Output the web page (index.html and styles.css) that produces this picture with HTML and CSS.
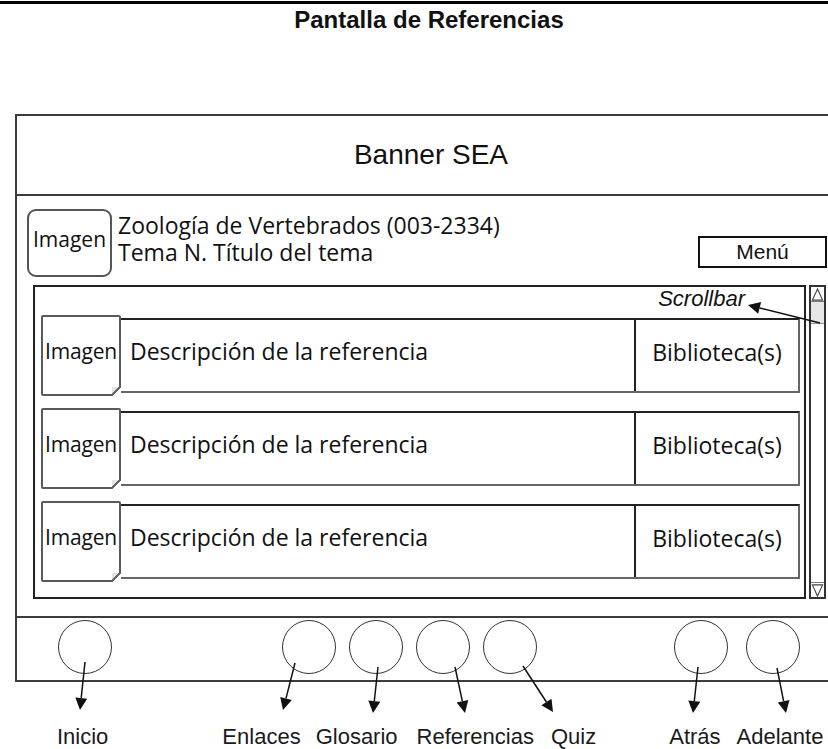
FILE: index.html
```html
<!doctype html>
<html lang="es">
 <head>
  <meta charset="UTF-8">
  <title>Pantalla de Referencias</title>
  <link rel="stylesheet" href="styles.css">
 </head>
 <body>
  <div class="page">
   <div class="topline"></div>
   <h1 class="title">Pantalla de Referencias</h1>

   <div class="frame">
    <div class="banner">Banner SEA</div>

    <!-- cabecera del curso -->
    <div class="course">
     <div class="course-img">Imagen</div>
     <div class="course-text">
      <p>Zoología de Vertebrados (003-2334)</p>
      <p>Tema N. Título del tema</p>
     </div>
     <div class="menu">Menú</div>
    </div>

    <!-- lista de referencias + scrollbar -->
    <div class="content">
     <div class="panel">
      <div class="scroll-note">Scrollbar</div>
      <div class="ref">
       <div class="ref-img">Imagen</div>
       <div class="ref-body">
        <div class="ref-desc">Descripción de la referencia</div>
        <div class="ref-lib">Biblioteca(s)</div>
       </div>
      </div>
      <div class="ref">
       <div class="ref-img">Imagen</div>
       <div class="ref-body">
        <div class="ref-desc">Descripción de la referencia</div>
        <div class="ref-lib">Biblioteca(s)</div>
       </div>
      </div>
      <div class="ref">
       <div class="ref-img">Imagen</div>
       <div class="ref-body">
        <div class="ref-desc">Descripción de la referencia</div>
        <div class="ref-lib">Biblioteca(s)</div>
       </div>
      </div>
     </div>
     <div class="scrollbar">
      <div class="sb-btn sb-up">
       <svg width="14" height="15" viewBox="0 0 14 15"><polygon points="7,1.5 1.5,13.5 12.5,13.5" fill="none" stroke="#444" stroke-width="1.2"/></svg>
      </div>
      <div class="sb-thumb"></div>
      <div class="sb-track"></div>
      <div class="sb-btn sb-down">
       <svg width="14" height="15" viewBox="0 0 14 15"><polygon points="1.5,1.5 12.5,1.5 7,13.5" fill="none" stroke="#444" stroke-width="1.2"/></svg>
      </div>
     </div>
    </div>

    <!-- botones de navegacion -->
    <div class="nav">
     <div class="circle"></div>
     <div class="circle"></div>
     <div class="circle"></div>
     <div class="circle"></div>
     <div class="circle"></div>
     <div class="circle"></div>
     <div class="circle"></div>
    </div>
   </div>

   <div class="captions">
    <span>Inicio</span>
    <span>Enlaces</span>
    <span>Glosario</span>
    <span>Referencias</span>
    <span>Quiz</span>
    <span>Atrás</span>
    <span>Adelante</span>
   </div>

   <!-- flechas de anotacion -->
   <svg class="arrows" width="828" height="749" viewBox="0 0 828 749">
    <g stroke="#111" stroke-width="1.5" fill="none">
     <line x1="820" y1="323" x2="759.6" y2="307.9"/>
     <line x1="85" y1="662" x2="81.2" y2="698"/>
     <line x1="295" y1="663" x2="286" y2="698.4"/>
     <line x1="378" y1="667" x2="374.3" y2="701"/>
     <line x1="455" y1="667" x2="462.4" y2="701.3"/>
     <line x1="523" y1="666" x2="546.4" y2="702"/>
     <line x1="698" y1="667" x2="694.3" y2="701"/>
     <line x1="777" y1="668" x2="783.6" y2="701.2"/>
    </g>
    <g fill="#111">
     <polygon points="748,305 761.1,302.1 758.2,313.7"/>
     <polygon points="80,710 75.3,697.4 87.2,698.7"/>
     <polygon points="283,710 280.2,696.9 291.8,699.9"/>
     <polygon points="373,713 368.3,700.4 380.3,701.7"/>
     <polygon points="465,713 456.6,702.5 468.3,700"/>
     <polygon points="553,712 541.4,705.2 551.5,698.7"/>
     <polygon points="693,713 688.3,700.4 700.3,701.7"/>
     <polygon points="786,713 777.8,702.4 789.5,700"/>
    </g>
   </svg>
  </div>
 </body>
</html>
```

FILE: styles.css
```css
/* reset */
*{margin:0;padding:0;box-sizing:border-box}
html,body{overflow:hidden}

body{
	background:#fff;
	color:#111;
	font-family:"Liberation Sans",Arial,sans-serif;
}

.page{
	position:relative;
	width:828px;
	height:749px;
	overflow:hidden;
}

.topline{
	height:3px;
	margin-top:1px;
	background:#000;
}

.title{
	margin-top:2px;
	padding-left:30px;
	font-size:24px;
	line-height:28px;
	font-weight:bold;
	text-align:center;
}

/* marco principal, sale por la derecha */
.frame{
	width:830px;
	margin:80px 0 0 15px;
	border:2px solid #3c3c3c;
	border-right:none;
}

.banner{
	height:80px;
	border-bottom:2px solid #3c3c3c;
	display:flex;
	align-items:center;
	justify-content:center;
	font-size:28px;
}

.course{
	height:89px;
	display:flex;
	align-items:flex-start;
	padding:13px 18px 0 10px;
	font-family:"Open Sans","Noto Sans",sans-serif;
}
.course-img{
	width:85px;
	height:68px;
	padding-bottom:9px;
	border:2px solid #555;
	border-radius:9px;
	display:flex;
	align-items:center;
	justify-content:center;
	font-size:21px;
}
.course-text{
	margin:3px 0 0 6px;
	font-size:23px;
	line-height:27px;
}
.menu{
	margin:27px 0 0 auto;
	width:129px;
	height:32px;
	border:2px solid #111;
	font-family:"Liberation Sans",Arial,sans-serif;
	font-size:21px;
	line-height:27px;
	text-align:center;
}

.content{
	display:flex;
	gap:3px;
	height:314px;
	margin:0 0 17px 16px;
}
.panel{
	width:773px;
	border:2px solid #222;
	padding:0 4px 0 6px;
}
.scroll-note{
	height:28px;
	line-height:24px;
	padding-right:55px;
	text-align:right;
	font-style:italic;
	font-size:22px;
}

.ref{
	display:flex;
	align-items:center;
	height:81px;
	margin-bottom:12px;
	font-family:"Open Sans","Noto Sans",sans-serif;
	font-size:23px;
}
.ref-img{
	position:relative;
	width:80px;
	height:81px;
	padding-bottom:9px;
	border:2px solid #5a5a5a;
	border-radius:2px;
	display:flex;
	align-items:center;
	justify-content:center;
	z-index:1;
	background:#fff;
	font-size:21px;
	letter-spacing:-0.2px;
}
/* esquina doblada */
.ref-img::after{
	content:'';
	position:absolute;
	right:-2px;
	bottom:-2px;
	width:9px;
	height:9px;
	background:linear-gradient(to top left,#fff 0,#fff 45%,#666 45%,#666 62%,#e4e4e4 62%);
}
.ref-body{
	flex:1;
	height:75px;
	margin-left:-2px;
	display:flex;
	border-top:2px solid #222;
	border-right:2px solid #666;
	border-bottom:2px solid #666;
}
.ref-desc{
	flex:1;
	padding:0 0 9px 11px;
	display:flex;
	align-items:center;
}
.ref-lib{
	width:164px;
	padding-bottom:7px;
	border-left:2px solid #222;
	display:flex;
	align-items:center;
	justify-content:center;
}

.scrollbar{
	width:17px;
	border:2px solid #333;
	display:flex;
	flex-direction:column;
}
.sb-btn{
	height:15px;
	display:flex;
	justify-content:center;
}
.sb-up{border-bottom:1px solid #777}
.sb-down{border-top:1px solid #777}
.sb-thumb{
	height:22px;
	background:#e6e6e6;
	border-bottom:1px solid #999;
}
.sb-track{flex:1}

.nav{
	height:64px;
	border-top:2px solid #3c3c3c;
	display:flex;
	gap:13px;
	padding:2px 0 0 41px;
}
.circle{
	width:54px;
	height:54px;
	border:1.5px solid #333;
	border-radius:50%;
}
.circle:nth-child(2){margin-left:157px}
.circle:nth-child(6){margin-left:124px}
.circle:nth-child(7){margin-left:5px}

.captions{
	display:flex;
	margin-top:44px;
	padding-left:57px;
	font-size:22px;
	line-height:22px;
	color:#1a1a1a;
}
.captions span:nth-child(2){margin-left:114px}
.captions span:nth-child(3){margin-left:15px}
.captions span:nth-child(4){margin-left:19px}
.captions span:nth-child(5){margin-left:17px}
.captions span:nth-child(6){margin-left:73px}
.captions span:nth-child(7){margin-left:16px}

.arrows{
	position:absolute;
	top:0;
	left:0;
	pointer-events:none;
}
```
